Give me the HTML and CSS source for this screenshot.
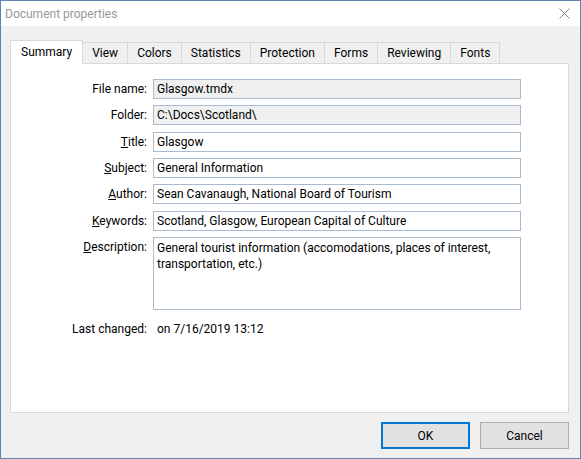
FILE: index.html
```html
<!DOCTYPE html>
<html>
<head>
<meta charset="utf-8">
<title>Document properties</title>
<link rel="stylesheet" href="styles.css">
</head>
<body>
<div class="window">
  <div class="titlebar">
    <span class="title">Document properties</span>
    <svg class="close" width="11" height="11" viewBox="0 0 11 11"><path d="M0.5 0.5 L10.5 10.5 M10.5 0.5 L0.5 10.5" stroke="#8c8c8c" stroke-width="1" fill="none"/></svg>
  </div>
  <div class="client">
    <div class="tabs">
      <div class="tab selected">Summary</div>
      <div class="tab">View</div>
      <div class="tab">Colors</div>
      <div class="tab">Statistics</div>
      <div class="tab">Protection</div>
      <div class="tab">Forms</div>
      <div class="tab">Reviewing</div>
      <div class="tab">Fonts</div>
    </div>
    <div class="panel">
      <div class="form">
        <div class="label">File name:</div>
        <div class="field readonly">Glasgow.tmdx</div>
        <div class="label">Folder:</div>
        <div class="field readonly">C:\Docs\Scotland\</div>
        <div class="label"><u>T</u>itle:</div>
        <div class="field">Glasgow</div>
        <div class="label"><u>S</u>ubject:</div>
        <div class="field">General Information</div>
        <div class="label"><u>A</u>uthor:</div>
        <div class="field">Sean Cavanaugh, National Board of Tourism</div>
        <div class="label"><u>K</u>eywords:</div>
        <div class="field">Scotland, Glasgow, European Capital of Culture</div>
        <div class="label top"><u>D</u>escription:</div>
        <div class="field multi">General tourist information (accomodations, places of interest, transportation, etc.)</div>
        <div class="label plain">Last changed:</div>
        <div class="value">on 7/16/2019 13:12</div>
      </div>
    </div>
    <div class="buttons">
      <button class="btn default">OK</button>
      <button class="btn">Cancel</button>
    </div>
  </div>
</div>
</body>
</html>
```
FILE: styles.css
```css
* { box-sizing: border-box; }
html, body {
  margin: 0;
  padding: 0;
  background: #f0f0f0;
}
body {
  font-family: "Segoe UI", Roboto, "Noto Sans", sans-serif;
  font-size: 12px;
  color: #000;
}
.window {
  width: 581px;
  height: 459px;
  border: 1px solid #5d84ad;
  background: #f0f0f0;
  display: flex;
  flex-direction: column;
}
.titlebar {
  height: 25px;
  background: #fff;
  display: flex;
  align-items: center;
  justify-content: space-between;
  padding: 0 10px 0 4px;
  flex: none;
}
.title {
  color: #999;
  font-size: 12px;
  line-height: 16px;
}
.close {
  display: block;
}
.client {
  flex: 1;
  display: flex;
  flex-direction: column;
  padding: 14px 11px 9px 9px;
}
.tabs {
  display: flex;
  align-items: flex-end;
  height: 23px;
  flex: none;
  position: relative;
  z-index: 1;
}
.tab {
  height: 21px;
  line-height: 20px;
  padding: 0 9px;
  border: 1px solid #d9d9d9;
  border-bottom: none;
  background: #f0f0f0;
  margin-left: -1px;
  white-space: nowrap;
}
.tab:first-child { margin-left: 0; }
.tab.selected {
  height: 24px;
  margin-bottom: -1px;
  line-height: 21px;
  padding: 1px 10px 0;
  background: #fff;
  position: relative;
  z-index: 2;
}
.panel {
  flex: 1;
  background: #fff;
  border: 1px solid #d9d9d9;
  padding-top: 15px;
}
.form {
  display: grid;
  grid-template-columns: 136px 368px;
  column-gap: 6px;
  row-gap: 6.33px;
}
.label {
  text-align: right;
  line-height: 20px;
  white-space: nowrap;
}
.label.plain { margin-top: 3px; }
.field {
  height: 20px;
  border: 1px solid #abbbcf;
  background: #fff;
  padding: 0 3px;
  line-height: 18px;
  white-space: nowrap;
  overflow: hidden;
}
.field.readonly { background: #f0f0f0; }
.field.multi {
  height: 73px;
  white-space: normal;
  line-height: 16px;
  padding-top: 2px;
}
.value {
  margin-top: 3px;
  line-height: 20px;
  padding-left: 4px;
}
.buttons {
  display: flex;
  justify-content: flex-end;
  gap: 10px;
  margin-top: 9px;
  flex: none;
}
.btn {
  width: 89px;
  height: 27px;
  font-family: inherit;
  font-size: 12px;
  color: #000;
  background: #e1e1e1;
  border: 1px solid #adadad;
  border-radius: 0;
  padding: 0;
  margin: 0;
}
.btn.default {
  border: 2px solid #0078d7;
}
```
